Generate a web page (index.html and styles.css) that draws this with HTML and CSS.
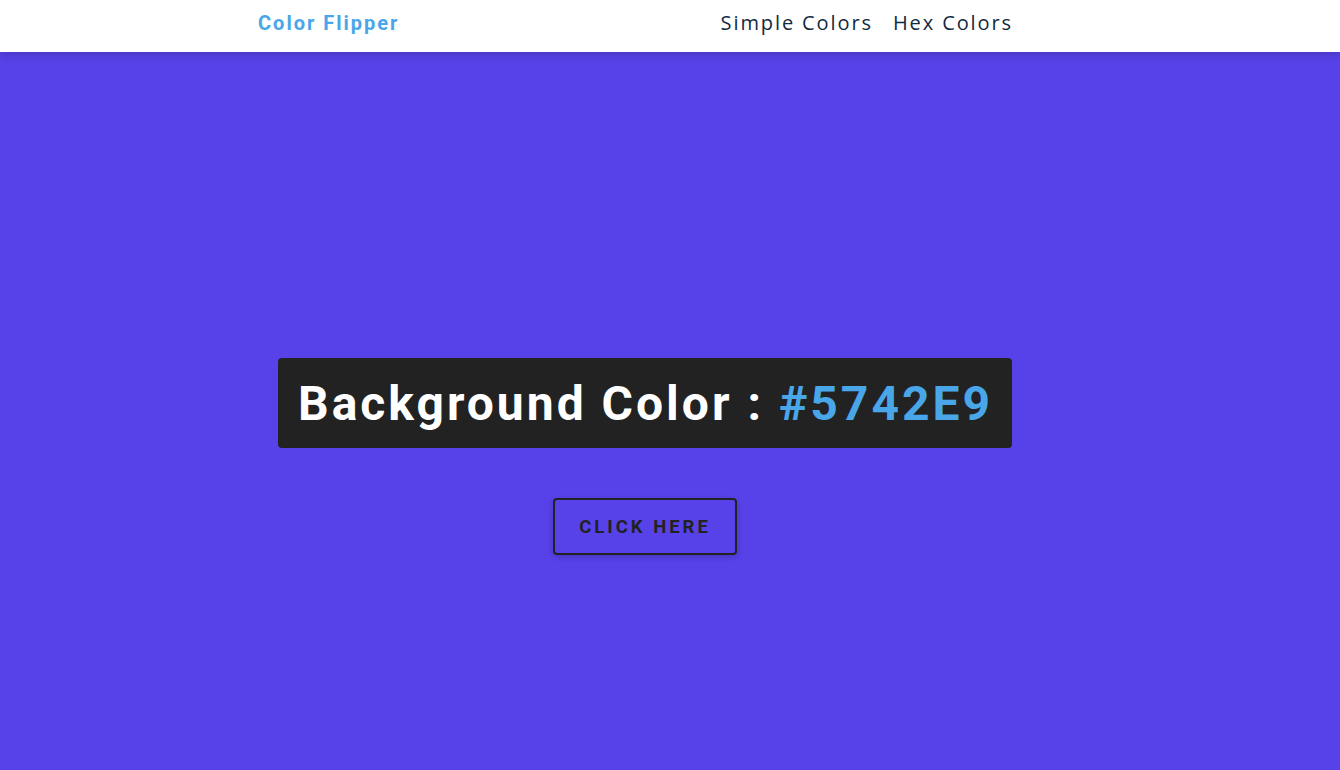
FILE: index.html
```html
<!DOCTYPE html>
<html lang="en">
<head>
<meta charset="utf-8">
<title>Color Flipper</title>
<link rel="stylesheet" href="styles.css">
</head>
<body>
<nav class="nav">
  <div class="nav-center">
    <h4 class="logo">Color Flipper</h4>
    <ul class="nav-links">
      <li><a href="#">Simple Colors</a></li>
      <li><a href="#">Hex Colors</a></li>
    </ul>
  </div>
</nav>
<main class="main">
  <div class="container">
    <h2 class="title">Background Color : <span class="color">#5742E9</span></h2>
    <button class="btn-hero">Click Here</button>
  </div>
</main>
</body>
</html>
```
FILE: styles.css
```css
* { margin: 0; padding: 0; box-sizing: border-box; }
html, body { height: 100%; }
body {
  background: #5742e9;
  font-family: Roboto, "Liberation Sans", sans-serif;
  overflow: hidden;
}
.nav {
  background: #fff;
  height: 52px;
  display: flex;
  align-items: center;
  box-shadow: 0 4px 8px rgba(0,0,0,0.15);
  position: relative;
  z-index: 1;
}
.nav-center {
  margin-left: 258px;
  width: 755px;
  display: flex;
  justify-content: space-between;
  align-items: center;
  padding-bottom: 7px;
}
.logo {
  font-family: Roboto, sans-serif;
  font-weight: 700;
  font-size: 20px;
  color: #49a6e9;
  letter-spacing: 2px;
}
.nav-links {
  list-style: none;
  display: flex;
  gap: 20px;
}
.nav-links a {
  font-family: "Open Sans", sans-serif;
  font-size: 20px;
  color: #102a42;
  text-decoration: none;
  letter-spacing: 1.9px;
}
.main {
  display: flex;
  justify-content: center;
  padding-top: 306px;
  padding-right: 50px;
}
.container {
  display: flex;
  flex-direction: column;
  align-items: center;
}
.title {
  background: #222;
  color: #fff;
  font-family: Roboto, sans-serif;
  font-weight: 700;
  font-size: 48px;
  letter-spacing: 3px;
  height: 90px;
  padding: 0 19px 0 20px;
  display: flex;
  align-items: center;
  border-radius: 4px;
  margin-bottom: 50px;
  white-space: pre;
}
.color { color: #49a6e9; }
.btn-hero {
  font-family: Roboto, sans-serif;
  text-transform: uppercase;
  background: transparent;
  color: #222;
  letter-spacing: 3px;
  font-weight: 700;
  font-size: 18.5px;
  border: 2px solid #222;
  border-radius: 4px;
  width: 184px;
  height: 57px;
  box-shadow: 0 2px 6px rgba(0,0,0,0.2);
}
```
